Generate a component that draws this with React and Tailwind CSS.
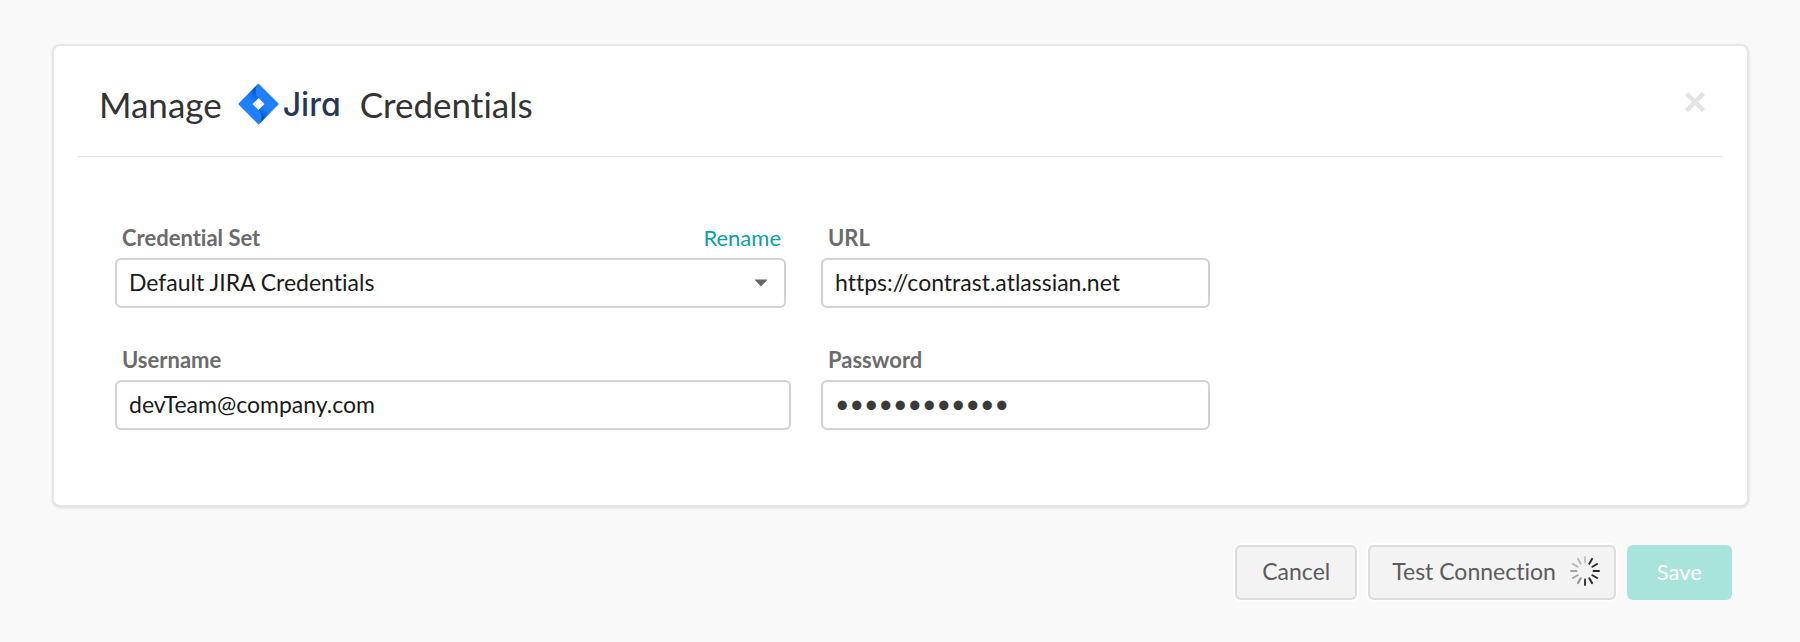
import { useState } from "react";

const SPOKES = [
  "#c4c4c4", "#2b2b2b", "#2b2b2b", "#2b2b2b", "#2b2b2b", "#2b2b2b",
  "#3a3a3a", "#8f8f8f", "#a3a3a3", "#a3a3a3", "#b5b5b5", "#b9b9b9",
];

function Spinner() {
  return (
    <svg className="size-[30px]" viewBox="0 0 30 30" aria-hidden="true">
      {SPOKES.map((color, i) => (
        <line
          key={i}
          x1="15"
          y1="1"
          x2="15"
          y2="6.5"
          stroke={color}
          strokeWidth="2"
          strokeLinecap="round"
          transform={`rotate(${i * 30} 15 15)`}
        />
      ))}
    </svg>
  );
}

function JiraLogo() {
  return (
    <span className="flex items-center gap-1">
      <svg className="h-[42px] w-[41px]" viewBox="0 0 41 42" aria-hidden="true">
        <defs>
          <linearGradient id="jira-top" x1="19" y1="8" x2="9" y2="18" gradientUnits="userSpaceOnUse">
            <stop offset="0.1" stopColor="#0052cc" />
            <stop offset="1" stopColor="#2684ff" stopOpacity="0" />
          </linearGradient>
          <linearGradient id="jira-bottom" x1="22" y1="34" x2="32" y2="24" gradientUnits="userSpaceOnUse">
            <stop offset="0.1" stopColor="#0052cc" />
            <stop offset="1" stopColor="#2684ff" stopOpacity="0" />
          </linearGradient>
        </defs>
        <path
          fill="#1f80ff"
          fillRule="evenodd"
          d="M20.5 0.5 40 20a1.4 1.4 0 0 1 0 2L20.5 41.5 1 22a1.4 1.4 0 0 1 0-2ZM20.5 15 14.5 21l6 6 6-6Z"
        />
        <path fill="url(#jira-top)" d="M20.5 0.5C16.5 5 16.5 11 20.5 15L14.5 21 8 13Z" />
        <path fill="url(#jira-bottom)" d="M20.5 41.5c4-4.5 4-10.5 0-14.5l6-6 6.5 8Z" />
      </svg>
      <span className="pt-0.5 font-[Inter,sans-serif] text-[32px] leading-[42px] font-medium text-[#253858] [font-feature-settings:'cv11']">
        Jira
      </span>
    </span>
  );
}

const label = "px-[7px] text-[22px] leading-7 font-bold text-[#6b6b6b]";
const box =
  "h-[50px] w-full rounded-md border-2 border-[#d2d2d2] bg-white px-3 outline-none focus:border-[#0aa2a2]";
const field = `${box} text-[23px] text-[#1a1a1a]`;
const grayButton =
  "flex h-[55px] items-center rounded-md border-2 border-[#dcdcdc] bg-[#f3f3f3] pb-[3px] text-[23px] text-[#5c5c5c] ring-2 ring-white";

export default function App() {
  const [url, setUrl] = useState("https://contrast.atlassian.net");
  const [username, setUsername] = useState("devTeam@company.com");
  const [password, setPassword] = useState("contrast1234");

  return (
    <main className="min-h-screen bg-[#f9f9f9] pt-11 pr-[51px] pb-8 pl-[52px] font-[Lato,sans-serif] [font-variant-ligatures:none]">
      <section className="rounded-lg border-2 border-[#e6e6e6] bg-white px-6 pb-[75px] shadow-sm">
        <header className="flex h-[111px] items-center justify-between border-b border-[#e2e2e2] pt-[6px] pr-4 pl-[21px]">
          <h1 className="flex items-center gap-4 text-[35px] leading-[42px] text-[#333333]">
            Manage <JiraLogo />
            <span className="pl-[3px]">Credentials</span>
          </h1>
          <button type="button" aria-label="Close" className="flex pb-1">
            <svg className="size-6" viewBox="0 0 24 24" aria-hidden="true">
              <path d="M3.5 3.5 20.5 20.5M20.5 3.5 3.5 20.5" stroke="#e4e4e4" strokeWidth="4.5" />
            </svg>
          </button>
        </header>

        <form className="ml-[37px] grid max-w-[1095px] grid-cols-[676fr_389fr] gap-x-[30px] gap-y-[38px] pt-[67px]">
          <div className="mr-[5px] flex flex-col gap-1.5">
            <div className="flex justify-between">
              <label htmlFor="set" className={label}>Credential Set</label>
              <a href="#rename" className="pr-[5px] text-[22px] leading-7 text-[#0aa2a2]">Rename</a>
            </div>
            <div className="relative">
              <select id="set" className={`${field} appearance-none pb-px`}>
                <option>Default JIRA Credentials</option>
              </select>
              <svg className="pointer-events-none absolute top-[21px] right-[18px] h-2 w-[14px]" viewBox="0 0 14 8" aria-hidden="true">
                <path d="M0.5 0.5h13L7 7.5Z" fill="#666666" />
              </svg>
            </div>
          </div>
          <div className="flex flex-col gap-1.5">
            <label htmlFor="url" className={label}>URL</label>
            <input id="url" type="text" value={url} onChange={(e) => setUrl(e.target.value)} className={`${field} pb-[3px]`} />
          </div>
          <div className="flex flex-col gap-1.5">
            <label htmlFor="username" className={label}>Username</label>
            <input id="username" type="text" value={username} onChange={(e) => setUsername(e.target.value)} className={`${field} pb-[3px]`} />
          </div>
          <div className="flex flex-col gap-1.5">
            <label htmlFor="password" className={label}>Password</label>
            <input
              id="password"
              type="password"
              value={password}
              onChange={(e) => setPassword(e.target.value)}
              className={`${box} pb-1 text-[25px] text-[#3a3a3a]`}
            />
          </div>
        </form>
      </section>

      <div className="mt-[38px] flex justify-end gap-[11px] pr-[17px]">
        <button type="button" className={`${grayButton} px-[25px]`}>Cancel</button>
        <button type="button" className={`${grayButton} gap-3.5 pr-3.5 pl-[22px]`}>
          Test Connection <Spinner />
        </button>
        <button type="button" className="h-[55px] rounded-md bg-[#a9e4dc] px-[30px] pb-[3px] text-[22px] text-white">Save</button>
      </div>
    </main>
  );
}
